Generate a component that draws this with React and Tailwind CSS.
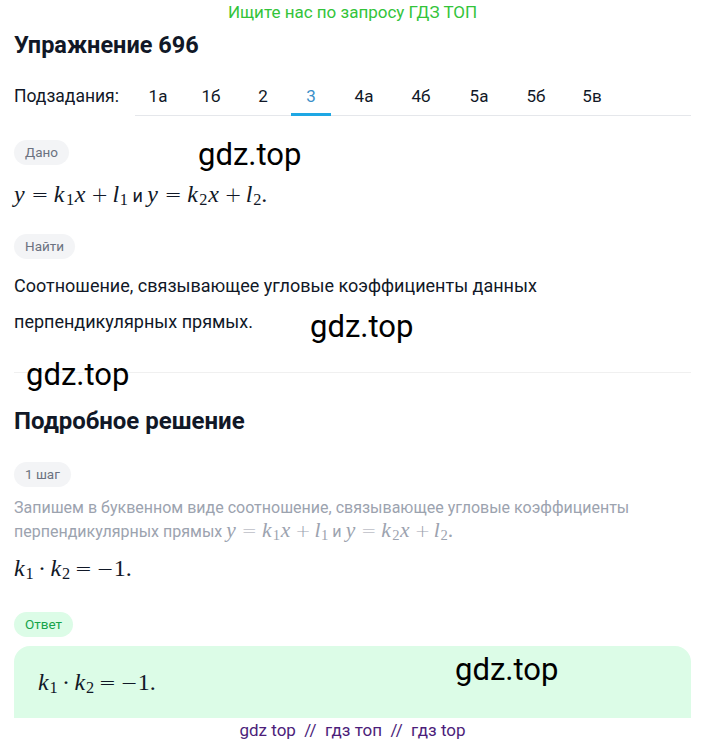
const tabs = [
  { t: '1а', w: 'w-[46px]' },
  { t: '1б', w: 'w-[60px]' },
  { t: '2', w: 'w-[44px]' },
  { t: '3', w: 'w-[52px]', active: true },
  { t: '4а', w: 'w-[54px]' },
  { t: '4б', w: 'w-[60px]' },
  { t: '5а', w: 'w-[56px]' },
  { t: '5б', w: 'w-[58px]' },
  { t: '5в', w: 'w-[54px]' },
];

function Pill({ children, green }) {
  return (
    <span
      className={`inline-flex items-center h-[25px] px-[11px] rounded-full text-[13.5px] ${
        green ? 'bg-[#dcfce7] text-[#16a34a]' : 'bg-[#f3f4f6] text-[#6b7280]'
      }`}
    >
      {children}
    </span>
  );
}

function Mark({ className = '' }) {
  return (
    <span className={`absolute text-[31px] leading-none text-black pointer-events-none ${className}`}>
      gdz.top
    </span>
  );
}

// KaTeX-like look: Liberation Serif letters, wide DejaVu operators
function Sub({ children }) {
  return <span className="relative top-[0.18em] text-[0.68em] not-italic">{children}</span>;
}

function Rel({ children }) {
  return (
    <span className="mx-[0.26em] font-['DejaVu_Sans',sans-serif] font-extralight text-[0.86em]">
      {children}
    </span>
  );
}

function Bin({ children }) {
  return (
    <span className="mx-[0.2em] font-['DejaVu_Sans',sans-serif] font-extralight text-[0.86em]">
      {children}
    </span>
  );
}

function V({ children, r = 'mr-[0.05em]' }) {
  return <i className={r}>{children}</i>;
}

function Given() {
  return (
    <span className="font-['Liberation_Serif',serif] whitespace-nowrap">
      <V>y</V>
      <Rel>=</Rel>
      <V r="mr-[0.06em]">k</V>
      <Sub>1</Sub>
      <V r="ml-[0.03em] mr-[0.06em]">x</V>
      <Bin>+</Bin>
      <V r="mr-[0.03em]">l</V>
      <Sub>1</Sub>
      <span className="font-['Roboto',sans-serif] text-[0.75em]"> и </span>
      <V>y</V>
      <Rel>=</Rel>
      <V r="mr-[0.06em]">k</V>
      <Sub>2</Sub>
      <V r="ml-[0.03em] mr-[0.06em]">x</V>
      <Bin>+</Bin>
      <V r="mr-[0.03em]">l</V>
      <Sub>2</Sub>.
    </span>
  );
}

function Product() {
  return (
    <span className="font-['Liberation_Serif',serif] whitespace-nowrap">
      <V r="mr-[0.04em]">k</V>
      <Sub>1</Sub>
      <span className="mx-[0.18em]">·</span>
      <V r="mr-[0.04em]">k</V>
      <Sub>2</Sub>
      <span className="mx-[0.22em] font-['DejaVu_Sans',sans-serif] font-extralight text-[0.86em]">=</span>
      <span className="font-['DejaVu_Sans',sans-serif] font-extralight text-[0.86em]">−</span>1.
    </span>
  );
}

export default function App() {
  return (
    <div className="relative w-[705px] h-[743px] bg-white overflow-hidden font-['Roboto',sans-serif] text-[#111827]">
      <div className="h-[24px] text-center text-[17px] leading-[24px] text-[#33c43a]">
        Ищите нас по запросу ГДЗ ТОП
      </div>

      <div className="px-[14px]">
        <h1 className="mt-[7px] text-[23.5px] font-bold leading-[28px]">Упражнение 696</h1>

        <div className="mt-[25px] flex items-end">
          <div className="w-[121px] pb-[8px] text-[17.5px] leading-[24px]">Подзадания:</div>
          <div className="flex-1 flex border-b border-[#e5e7eb]">
            {tabs.map((tab) => (
              <div key={tab.t} className={`${tab.w} flex flex-col items-center`}>
                <span
                  className={`text-[17px] leading-[24px] pb-[5px] ${
                    tab.active ? 'text-[#3b8fc9]' : 'text-[#111827]'
                  }`}
                >
                  {tab.t}
                </span>
                <span
                  className={`w-[40px] h-[3px] -mb-px ${tab.active ? 'bg-[#1ea7e4]' : 'bg-transparent'}`}
                />
              </div>
            ))}
          </div>
        </div>

        <div className="mt-[24px] flex">
          <Pill>Дано</Pill>
        </div>
        <div className="mt-[17px] h-[24px] text-[24px] leading-[24px]">
          <Given />
        </div>

        <div className="mt-[28px] flex">
          <Pill>Найти</Pill>
        </div>
        <p className="mt-[9px] text-[18px] leading-[36px]">
          Соотношение, связывающее угловые коэффициенты данных перпендикулярных прямых.
        </p>

        <div className="mt-[32px] border-t border-[#f0f0f0]" />

        <h2 className="mt-[34px] text-[24px] font-bold leading-[28px]">Подробное решение</h2>

        <div className="mt-[27px] flex">
          <Pill>1 шаг</Pill>
        </div>
        <p className="mt-[10px] text-[16px] leading-[22px] text-[#9ca3af]">
          Запишем в буквенном виде соотношение, связывающее угловые коэффициенты перпендикулярных
          прямых <span className="text-[21.5px] leading-[22px]"><Given /></span>
        </p>
        <div className="mt-[13px] h-[24px] text-[24px] leading-[24px]">
          <Product />
        </div>

        <div className="mt-[32px] flex">
          <Pill green>Ответ</Pill>
        </div>
        <div className="mt-[9px] h-[72px] rounded-t-[16px] bg-[#dcfce7] flex items-center px-[24px] text-[24px]">
          <Product />
        </div>
      </div>

      <div className="mt-px text-center text-[17px] leading-[22px] text-[#4c1d7a]">
        gdz top&nbsp; //&nbsp; гдз топ&nbsp; //&nbsp; гдз top
      </div>

      <Mark className="left-[198px] top-[139px]" />
      <Mark className="left-[310px] top-[311px]" />
      <Mark className="left-[26px] top-[359px]" />
      <Mark className="left-[455px] top-[654px]" />
    </div>
  );
}
